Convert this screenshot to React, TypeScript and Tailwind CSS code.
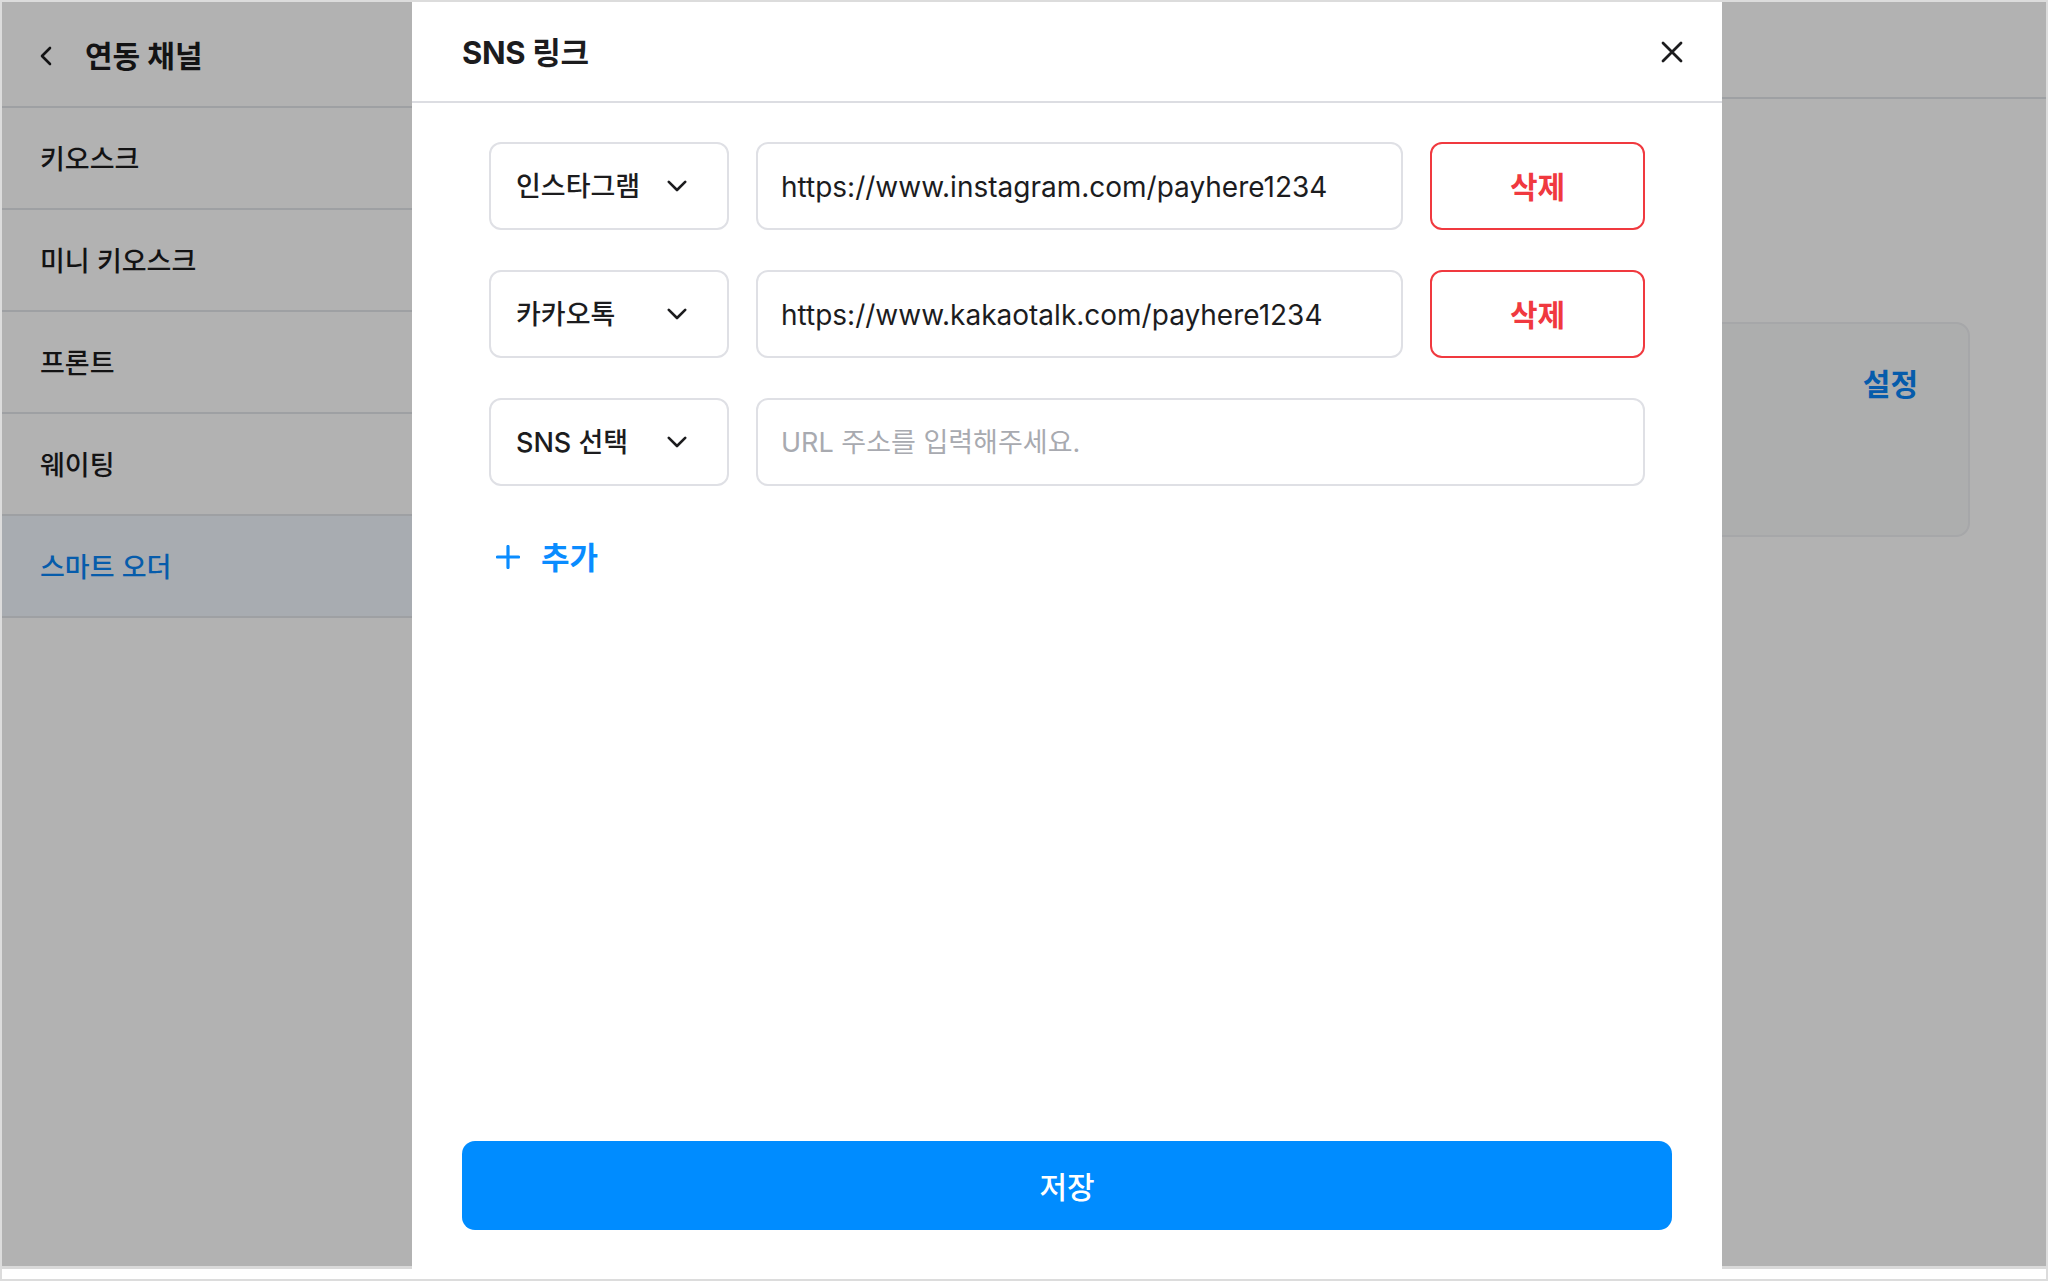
import React from "react";

const FONT = "font-[Inter,'Noto_Sans_CJK_KR',sans-serif]";

const menu = ["키오스크", "미니 키오스크", "프론트", "웨이팅", "스마트 오더"];

type LinkRow = { sns: string; url: string };

const links: LinkRow[] = [
  { sns: "인스타그램", url: "https://www.instagram.com/payhere1234" },
  { sns: "카카오톡", url: "https://www.kakaotalk.com/payhere1234" },
];

function ChevronDown() {
  return (
    <svg width="20" height="12" viewBox="0 0 20 12" fill="none">
      <path d="M1.8 1.8 L10 10 L18.2 1.8" stroke="#1c1c1e" strokeWidth="2.6" strokeLinecap="round" strokeLinejoin="round" />
    </svg>
  );
}

function ChevronLeft() {
  return (
    <svg width="12" height="20" viewBox="0 0 12 20" fill="none">
      <path d="M10 2 L2 10 L10 18" stroke="#1c1c1e" strokeWidth="2.6" strokeLinecap="round" strokeLinejoin="round" />
    </svg>
  );
}

function CloseIcon() {
  return (
    <svg width="22" height="22" viewBox="0 0 22 22" fill="none">
      <path d="M2 2 L20 20 M20 2 L2 20" stroke="#1c1c1e" strokeWidth="2.8" strokeLinecap="round" />
    </svg>
  );
}

function PlusIcon() {
  return (
    <svg width="24" height="24" viewBox="0 0 24 24" fill="none">
      <path d="M12 1.5 V22.5 M1.5 12 H22.5" stroke="#0a8cff" strokeWidth="3.2" strokeLinecap="round" />
    </svg>
  );
}

function SnsSelect({ label }: { label: string }) {
  return (
    <div className="flex h-[88px] w-[240px] shrink-0 items-center justify-between rounded-[12px] border-2 border-[#dfe0e5] pl-[25px] pr-[40px]">
      <span className="pt-[3px] text-[27px] font-medium text-[#1c1c1e]">{label}</span>
      <ChevronDown />
    </div>
  );
}

function UrlField({ value }: { value?: string }) {
  return (
    <div className="flex h-[88px] min-w-0 flex-1 items-center rounded-[12px] border-2 border-[#dfe0e5] px-[23px]">
      {value ? (
        <span className="truncate pt-[2px] text-[28px] text-[#1c1c1e]">{value}</span>
      ) : (
        <span className="truncate pt-[2px] text-[27px] text-[#a8aab0]">URL 주소를 입력해주세요.</span>
      )}
    </div>
  );
}

function SnsLinkModal() {
  return (
    <div className="absolute left-[410px] top-0 flex h-[1267px] w-[1310px] flex-col bg-white">
      <div className="flex h-[101px] shrink-0 items-center justify-between border-b-2 border-[#dcdde2] pl-[50px] pr-[39px]">
        <h2 className="pt-[4px] text-[31px] font-bold tracking-[-0.3px] text-[#1c1c1e]">SNS 링크</h2>
        <CloseIcon />
      </div>

      <div className="flex flex-col gap-[40px] px-[77px] pt-[39px]">
        {links.map((l) => (
          <div key={l.url} className="flex items-center gap-[27px]">
            <SnsSelect label={l.sns} />
            <UrlField value={l.url} />
            <button className="flex h-[88px] w-[215px] shrink-0 items-center justify-center rounded-[12px] border-2 border-[#f0393f] pt-[3px] text-[30px] font-semibold text-[#f0393f]">
              삭제
            </button>
          </div>
        ))}
        <div className="flex items-center gap-[27px]">
          <SnsSelect label="SNS 선택" />
          <UrlField />
        </div>
      </div>

      <button className="ml-[84px] mt-[51px] flex h-[40px] items-center gap-[21px] self-start">
        <PlusIcon />
        <span className="pt-[3px] text-[31px] font-semibold text-[#0a8cff]">추가</span>
      </button>

      <div className="mt-auto px-[50px] pb-[39px]">
        <button className="flex h-[89px] w-full items-center justify-center rounded-[13px] bg-[#008cff] pt-[3px] text-[30px] font-medium text-white">
          저장
        </button>
      </div>
    </div>
  );
}

export default function App() {
  return (
    <div className={`${FONT} flex h-[1281px] w-[2048px] flex-col overflow-hidden border-2 border-[#dcdcdc] bg-white`}>
      <div className="relative flex h-[1267px] shrink-0">
        {/* channel sidebar */}
        <aside className="flex w-[410px] shrink-0 flex-col bg-white">
          <div className="flex h-[106px] items-center gap-[33px] border-b-2 border-[#e3e5ea] pl-[38px]">
            <span className="pt-[4px]">
              <ChevronLeft />
            </span>
            <span className="pt-[5px] text-[30px] font-bold text-[#1c1c1e]">연동 채널</span>
          </div>
          {menu.map((m, i) => {
            const active = i === menu.length - 1;
            return (
              <div
                key={m}
                className={
                  active
                    ? "flex h-[102px] items-center border-b-2 border-[#e3e5ea] bg-[#f1f7fe] pl-[38px] pt-[5px] text-[27px] font-medium text-[#0a84f5]"
                    : "flex h-[102px] items-center border-b-2 border-[#e3e5ea] pl-[38px] pt-[5px] text-[27px] font-medium text-[#1c1c1e]"
                }
              >
                {m}
              </div>
            );
          })}
        </aside>

        {/* channel detail */}
        <main className="flex flex-1 flex-col bg-white">
          <div className="h-[97px] shrink-0 border-b-2 border-[#e3e5ea]" />
          <div className="ml-[76px] mr-[76px] mt-[223px] h-[215px] rounded-[14px] border-2 border-[#eeeff2] bg-[#f8f9fa]">
            <div className="flex h-[118px] items-center justify-end pr-[50px]">
              <span className="pt-[3px] text-[30px] font-semibold text-[#0a84f5]">설정</span>
            </div>
          </div>
        </main>

        {/* dimmed backdrop */}
        <div className="absolute inset-0 border-b-[3px] border-[#d9d9d9] bg-black/30" />

        <SnsLinkModal />
      </div>
      <div className="flex-1 bg-white" />
    </div>
  );
}
